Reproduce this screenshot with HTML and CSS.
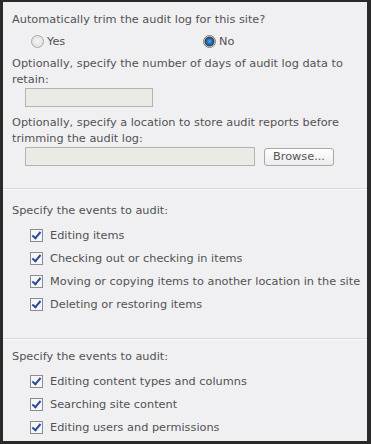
FILE: index.html
```html
<!DOCTYPE html>
<html lang="en">
<head>
  <meta charset="UTF-8">
  <title>Audit Settings</title>
  <link rel="stylesheet" href="styles.css">
</head>
<body>

<div class="frame">
  <div class="section first">
    <div class="label">Automatically trim the audit log for this site?</div>
    <div class="radios">
      <label class="radio"><span class="dot"></span>Yes</label>
      <label class="radio"><span class="dot on"></span>No</label>
    </div>
    <div class="label">Optionally, specify the number of days of audit log data to retain:</div>
    <div class="field"><span class="textbox short"></span></div>
    <div class="label">Optionally, specify a location to store audit reports before trimming the audit log:</div>
    <div class="field">
      <span class="textbox long"></span>
      <span class="btn">Browse...</span>
    </div>
  </div>

  <div class="section">
    <div class="label">Specify the events to audit:</div>
    <ul class="checks">
      <li><span class="box"></span>Editing items</li>
      <li><span class="box"></span>Checking out or checking in items</li>
      <li><span class="box"></span>Moving or copying items to another location in the site</li>
      <li><span class="box"></span>Deleting or restoring items</li>
    </ul>
  </div>

  <div class="section last">
    <div class="label">Specify the events to audit:</div>
    <ul class="checks">
      <li><span class="box"></span>Editing content types and columns</li>
      <li><span class="box"></span>Searching site content</li>
      <li><span class="box"></span>Editing users and permissions</li>
    </ul>
  </div>
</div>

</body>
</html>
```

FILE: styles.css
```css
html, body {
  margin: 0;
  padding: 0;
  background: #2a2a2a;
}

body {
  font-family: 'DejaVu Sans', Verdana, sans-serif;
  font-size: 11.3px;
  color: #525252;
}

.frame {
  margin: 2px 4px 3px 3px;
  height: 439px;
  background: #f0f0f2;
  overflow: hidden;
}

.section {
  padding: 14px 9px 22px 9px;
  border-bottom: 1px solid #d9d9d9;
  box-shadow: 0 1px 0 #fafafa;
}

.section.first {
  padding-top: 10px;
  padding-bottom: 22px;
}

.section.last {
  padding-top: 10px;
  border-bottom: none;
  box-shadow: none;
}

.label {
  line-height: 16px;
}

.radios {
  display: flex;
  padding: 7px 0 8px 19px;
}

.radio {
  display: flex;
  align-items: center;
  flex: none;
  width: 172px;
}

.dot {
  flex: none;
  width: 11px;
  height: 11px;
  border-radius: 50%;
  border: 1px solid #a8a8a8;
  background: radial-gradient(circle, #f4f4f4 0%, #dcdcdc 100%);
  margin-right: 3px;
}

.dot.on {
  background: radial-gradient(circle, #4fa8e8 0%, #1a5aa0 45%, #2d3a48 55%, #e8e8e8 70%);
  border-color: #7a7a7a;
}

.field {
  display: flex;
  align-items: center;
  padding: 0 0 8px 13px;
}

.textbox {
  display: block;
  height: 17px;
  border: 1px solid #b3b3b3;
  background: #ebebe6;
}

.textbox.short {
  width: 126px;
}

.textbox.long {
  width: 228px;
}

.btn {
  margin-left: 9px;
  height: 16px;
  line-height: 16px;
  padding: 0 8px;
  border: 1px solid #a8a8a8;
  border-radius: 3px;
  background: linear-gradient(#ffffff, #ececec);
  color: #555;
}

.section.first .field:last-child {
  padding-bottom: 0;
}

.checks {
  list-style: none;
  margin: 0;
  padding: 5px 0 0 18px;
}

.checks li {
  display: flex;
  align-items: center;
  height: 23px;
  white-space: nowrap;
}

.box {
  flex: none;
  width: 11px;
  height: 11px;
  border: 1px solid #8c8c8c;
  background: #f6f6f8;
  margin-right: 7px;
  position: relative;
}

.box::after {
  content: '';
  position: absolute;
  left: 3px;
  top: 0px;
  width: 3px;
  height: 7px;
  border-right: 2px solid #2c4a9a;
  border-bottom: 2px solid #2c4a9a;
  transform: rotate(40deg);
}
```
